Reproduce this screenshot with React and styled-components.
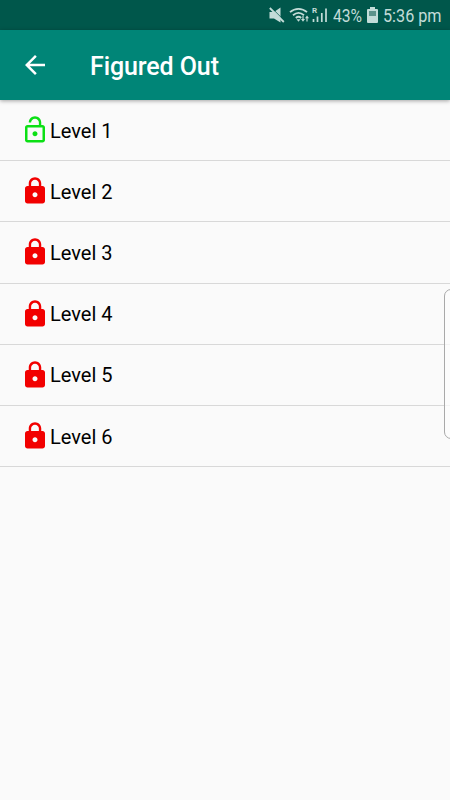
import React from 'react';
import styled, { createGlobalStyle } from 'styled-components';

const GlobalStyle = createGlobalStyle`
    * {
        box-sizing: border-box;
    }

    body {
        margin: 0;
        background-color: #fafafa;
        font-family: Roboto, sans-serif;
    }
`;

const Screen = styled.div`
    position: relative;
    width: 100%;
    height: 800px;
    overflow: hidden;
    background-color: #fafafa;
`;

const StatusBar = styled.div`
    display: flex;
    align-items: center;
    justify-content: flex-end;
    height: 30px;
    padding-right: 8px;
    background-color: #00574b;
    color: #c3dcd8;

    svg {
        display: block;
        flex: none;
    }
`;

const StatusIcons = styled.div`
    display: flex;
    align-items: center;
    gap: 3px;
    margin-right: 5px;
`;

/* the status text is narrower than regular Roboto */
const StatusText = styled.div`
    width: ${props => props.$width}px;
    padding-top: 2px;
    font-size: 18px;
    line-height: 28px;
    white-space: nowrap;

    span {
        display: inline-block;
        transform: scaleX(${props => props.$scale});
        transform-origin: left center;
    }
`;

const Battery = styled.div`
    margin: 0 5px 0 4px;
`;

const AppBar = styled.header`
    position: relative;
    display: flex;
    align-items: center;
    height: 70px;
    padding-left: 20px;
    background-color: #008577;
    color: #fff;
    box-shadow: 0 1px 4px rgba(0, 0, 0, 0.35);

    svg {
        display: block;
    }
`;

const Title = styled.h1`
    margin: 4px 0 0 40px;
    font-size: 25px;
    font-weight: 500;
    line-height: 30px;
    letter-spacing: -0.1px;
`;

const LevelList = styled.ul`
    margin: 0;
    padding: 0;
    list-style: none;
`;

const LevelRow = styled.li`
    display: flex;
    align-items: center;
    height: 61.2px;
    padding-left: 20px;
    border-bottom: 1px solid #d8d8d8;
    color: #000;
    font-size: 20px;

    svg {
        display: block;
        flex: none;
        color: ${props => props.$open ? '#0be015' : '#f20000'};
    }
`;

const LevelName = styled.span`
    padding-top: 1px;
`;

const EdgeHandle = styled.div`
    position: absolute;
    top: 289px;
    right: -10px;
    width: 16px;
    height: 150px;
    border: 1px solid #a9a9a9;
    border-radius: 7px;
    background-color: rgba(252, 252, 252, 0.75);
`;

const MuteIcon = () => (
    <svg width="18" height="18" viewBox="0 0 18 18" fill="currentColor">
        <path d="M1.500 6h4.500L12.500 1.500v15L6 12.500H1.500z" />
        <path d="M2.800 1.200l14 14" stroke="#00574b" strokeWidth="1" />
        <path d="M1.800 2l14 14" stroke="currentColor" strokeWidth="1.800" />
    </svg>
);

const WifiIcon = () => (
    <svg width="21" height="18" viewBox="0 0 21 18" fill="none" stroke="currentColor">
        <path d="M1 6.200c5-4.500 12-4.500 17 0M4 9.200c3.500-3 7.500-3 11 0M6.800 12c1.700-1.500 3.700-1.500 5.400 0" strokeWidth="1.800" />
        <path d="M7.500 13.300h4l-2 2.500z" fill="currentColor" stroke="none" />
        <path d="M14 10v4M18 11.500v4" strokeWidth="1.200" />
        <path d="M12 13h4l-2 2.700zM16 12.300h4l-2-2.700z" fill="currentColor" stroke="none" />
    </svg>
);

const SignalBars = styled.div`
    position: relative;
    width: 16px;
    height: 18px;
    margin-left: -1px;
`;

const Roaming = styled.span`
    position: absolute;
    top: 1px;
    left: 0;
    font-size: 8px;
    font-weight: 700;
    line-height: 8px;
`;

const SignalIcon = () => (
    <SignalBars>
        <Roaming>R</Roaming>
        <svg width="16" height="18" viewBox="0 0 16 18" stroke="currentColor" strokeWidth="1.700">
            <path d="M1.500 13v3M5.500 10.500V16M9.800 7v9M14 2.500V16" />
        </svg>
    </SignalBars>
);

const BatteryIcon = () => (
    <svg width="11" height="16" viewBox="0 0 11 16" fill="currentColor">
        <path d="M3 0h5v2h2q1 0 1 1v12q0 1-1 1H1q-1 0-1-1V3q0-1 1-1h2z" />
        <path d="M2 4h7v5H2z" fill="#5d938b" />
    </svg>
);

const BackIcon = () => (
    <svg width="30" height="30" viewBox="0 0 24 24" fill="currentColor">
        <path d="M20 11H7.830l5.590-5.590L12 4l-8 8 8 8 1.410-1.410L7.830 13H20v-2z" />
    </svg>
);

const LockIcon = () => (
    <svg width="30" height="30" viewBox="0 0 24 24" fill="currentColor">
        <path d="M18 8h-1V6c0-2.760-2.240-5-5-5S7 3.240 7 6v2H6c-1.100 0-2 .9-2 2v10c0 1.100.9 2 2 2h12c1.100 0 2-.9 2-2V10c0-1.100-.9-2-2-2zm-6 9c-1.100 0-2-.9-2-2s.9-2 2-2 2 .9 2 2-.9 2-2 2zm3.100-9H8.900V6c0-1.710 1.390-3.100 3.100-3.100 1.710 0 3.100 1.390 3.100 3.100v2z" />
    </svg>
);

const LockOpenIcon = () => (
    <svg width="30" height="30" viewBox="0 0 24 24" fill="currentColor">
        <path d="M12 17c1.100 0 2-.9 2-2s-.9-2-2-2-2 .9-2 2 .9 2 2 2zm6-9h-1V6c0-2.760-2.240-5-5-5S7 3.240 7 6h1.900c0-1.710 1.390-3.100 3.100-3.100 1.710 0 3.100 1.390 3.100 3.100v2H6c-1.100 0-2 .9-2 2v10c0 1.100.9 2 2 2h12c1.100 0 2-.9 2-2V10c0-1.100-.9-2-2-2zm0 12H6V10h12v10z" />
    </svg>
);

const levels = [
    { name: 'Level 1', open: true },
    { name: 'Level 2', open: false },
    { name: 'Level 3', open: false },
    { name: 'Level 4', open: false },
    { name: 'Level 5', open: false },
    { name: 'Level 6', open: false },
];

const App = () => {
    return (
        <>
            <GlobalStyle />
            <Screen>
                <StatusBar>
                    <StatusIcons>
                        <MuteIcon />
                        <WifiIcon />
                        <SignalIcon />
                    </StatusIcons>
                    <StatusText $width={30} $scale={0.87}><span>43%</span></StatusText>
                    <Battery>
                        <BatteryIcon />
                    </Battery>
                    <StatusText $width={59} $scale={0.9}><span>5:36 pm</span></StatusText>
                </StatusBar>

                <AppBar>
                    <BackIcon />
                    <Title>Figured Out</Title>
                </AppBar>

                <LevelList>
                    {levels.map(level => (
                        <LevelRow key={level.name} $open={level.open}>
                            {level.open ? <LockOpenIcon /> : <LockIcon />}
                            <LevelName>{level.name}</LevelName>
                        </LevelRow>
                    ))}
                </LevelList>

                <EdgeHandle />
            </Screen>
        </>
    );
}

export default App;
